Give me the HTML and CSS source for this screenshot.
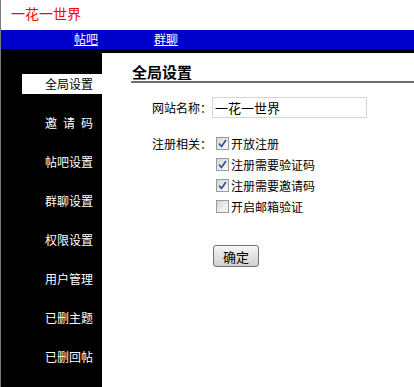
FILE: index.html
```html
<!DOCTYPE html>
<html lang="zh-CN">
<head>
  <meta charset="UTF-8">
  <title>全局设置 - 一花一世界</title>
  <link rel="stylesheet" href="styles.css">
</head>
<body>
  <div class="page">
    <div class="header">一花一世界</div>
    <div class="nav">
      <a href="#">帖吧</a>
      <a href="#">群聊</a>
    </div>
    <div class="strip"></div>

    <div class="main">
      <ul class="side">
        <li class="active"><a href="#">全局设置</a></li>
        <li><a href="#">邀&ensp;请&ensp;码</a></li>
        <li><a href="#">帖吧设置</a></li>
        <li><a href="#">群聊设置</a></li>
        <li><a href="#">权限设置</a></li>
        <li><a href="#">用户管理</a></li>
        <li><a href="#">已删主题</a></li>
        <li><a href="#">已删回帖</a></li>
      </ul>

      <div class="content">
        <h2>全局设置</h2>

        <div class="row">
          <label class="label" for="sitename">网站名称：</label>
          <input type="text" id="sitename" class="text" value="一花一世界">
        </div>

        <div class="row reg">
          <span class="label">注册相关：</span>
          <div class="checks">
            <label class="check"><span class="box on"><svg width="9" height="9" viewBox="0 0 9 9"><path d="M1 4.5 L3.5 7.5 L8 1" fill="none" stroke="#2b4c9c" stroke-width="1.6"/></svg></span>开放注册</label>
            <label class="check"><span class="box on"><svg width="9" height="9" viewBox="0 0 9 9"><path d="M1 4.5 L3.5 7.5 L8 1" fill="none" stroke="#2b4c9c" stroke-width="1.6"/></svg></span>注册需要验证码</label>
            <label class="check"><span class="box on"><svg width="9" height="9" viewBox="0 0 9 9"><path d="M1 4.5 L3.5 7.5 L8 1" fill="none" stroke="#2b4c9c" stroke-width="1.6"/></svg></span>注册需要邀请码</label>
            <label class="check"><span class="box"></span>开启邮箱验证</label>
          </div>
        </div>

        <div class="actions">
          <button type="button">确定</button>
        </div>
      </div>
    </div>
  </div>
</body>
</html>
```

FILE: styles.css
```css
html, body {
  margin: 0;
  padding: 0;
  height: 100%;
}
body {
  font-family: "Noto Sans CJK SC", "Liberation Sans", sans-serif;
  font-size: 12px;
  color: #000;
  background: #fff;
}
.page {
  min-height: 100%;
  border-left: 1px solid #7a7a7a;
  display: flex;
  flex-direction: column;
}
.header {
  height: 30px;
  line-height: 26px;
  padding-left: 10px;
  color: #ff0000;
  font-size: 14px;
}
.nav {
  height: 19px;
  line-height: 18px;
  background-color: #0000cc;
  padding-left: 73px;
  display: flex;
  gap: 56px;
}
.nav a {
  color: #fff;
  font-size: 12px;
}
.strip {
  height: 4px;
  background: #000;
}
.main {
  flex: 1;
  display: flex;
}
.side {
  list-style: none;
  margin: 0;
  padding: 21px 0 0 0;
  width: 101px;
  background: #000;
}
.side li {
  margin-left: 21px;
  height: 20px;
  line-height: 20px;
  margin-bottom: 19px;
  text-align: right;
  padding-right: 9px;
}
.side li:nth-child(3),
.side li:nth-child(6),
.side li:nth-child(7) {
  margin-top: 1px;
}
.side a {
  color: #fff;
  text-decoration: none;
}
.side li.active {
  background: #fff;
}
.side li.active a {
  color: #000;
}
.content {
  flex: 1;
  padding-left: 29px;
}
h2 {
  margin: 9px 0 0 0;
  font-size: 15px;
  line-height: 19px;
  padding-left: 1px;
  border-bottom: 2px solid #6f6f6f;
}
.row {
  display: flex;
  align-items: center;
  margin-top: 14px;
}
.label {
  width: 81px;
  text-align: right;
  flex-shrink: 0;
}
.text {
  width: 155px;
  height: 21px;
  box-sizing: border-box;
  border: 1px solid #d4d4d4;
  padding: 0 2px;
  font-family: inherit;
  font-size: 13px;
  margin: 0;
}
.reg {
  align-items: flex-start;
  margin-top: 15px;
}
.reg .label {
  line-height: 21px;
}
.checks {
  display: flex;
  flex-direction: column;
  padding-left: 4px;
}
.check {
  display: flex;
  align-items: center;
  height: 21px;
}
.box {
  width: 11px;
  height: 11px;
  border: 1px solid #9a9a9a;
  background: linear-gradient(135deg, #d6d6d6, #fbfbfb);
  margin-right: 2px;
  display: flex;
  align-items: center;
  justify-content: center;
}
.actions {
  padding-left: 82px;
  margin-top: 28px;
}
button {
  width: 46px;
  height: 22px;
  font-family: inherit;
  font-size: 13px;
  padding: 0;
  border: 1px solid #707070;
  border-radius: 3px;
  background: linear-gradient(#f6f6f6, #e2e2e2 50%, #d0d0d0);
  color: #000;
}
```
